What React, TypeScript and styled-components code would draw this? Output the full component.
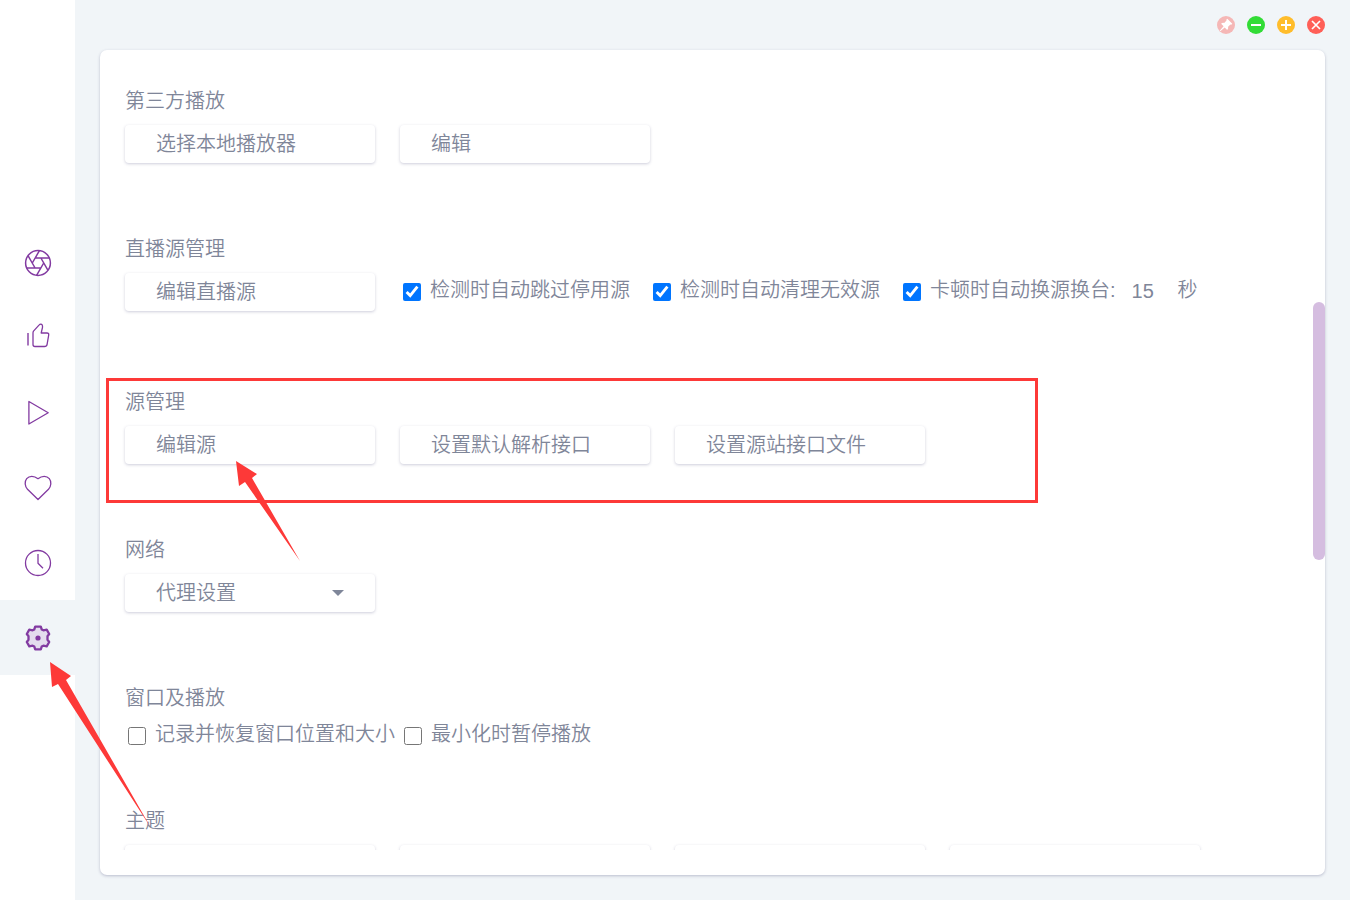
import React from "react";
import styled, { createGlobalStyle, css } from "styled-components";

const purple = "#823aa1";
const ink = "#7f8699";
const haze = "#f1f5f8";
const red = "#fd3938";

const Global = createGlobalStyle`
  * { box-sizing: border-box; }
  body {
    margin: 0;
    background: ${haze};
    color: ${ink};
    font: 350 20px/24px "Liberation Sans", "Noto Sans CJK SC", sans-serif;
  }
  button, input, select { font: inherit; color: inherit; }
`;

const Shell = styled.div`
  display: flex;
  height: 100vh;
`;

const Sidebar = styled.nav`
  flex: 0 0 75px;
  display: flex;
  flex-direction: column;
  justify-content: center;
  background: #fff;
`;

const NavSlot = styled.div`
  position: relative;
`;

const NavButton = styled.button<{ $active?: boolean }>`
  display: flex;
  align-items: center;
  justify-content: center;
  width: 100%;
  height: 75px;
  padding: 0;
  border: 0;
  background: ${(p) => (p.$active ? haze : "transparent")};
  color: ${purple};
  cursor: pointer;
`;

const Main = styled.main`
  flex: 1;
  min-width: 0;
  display: flex;
  flex-direction: column;
  padding: 0 25px 25px;
`;

const TitleBar = styled.header`
  flex: 0 0 50px;
  display: flex;
  align-items: center;
  justify-content: flex-end;
  gap: 12px;
`;

const WindowButton = styled.button<{ $color: string }>`
  display: block;
  width: 18px;
  height: 18px;
  padding: 0;
  border: 0;
  border-radius: 50%;
  background: ${(p) => p.$color};
  cursor: pointer;
`;

const Panel = styled.div`
  position: relative;
  flex: 1;
  min-height: 0;
  display: flex;
  flex-direction: column;
  padding: 25px 0;
  border-radius: 7px;
  background: #fff;
  box-shadow: 0 1px 3px rgba(60, 60, 110, 0.3);
`;

const Viewport = styled.div`
  flex: 1;
  min-height: 0;
  padding: 0 25px;
  overflow: hidden;
`;

const ScrollThumb = styled.div`
  position: absolute;
  right: 0;
  top: 252px;
  width: 12px;
  height: 258px;
  border-radius: 6px;
  background: #d5bde0;
`;

const Section = styled.section`
  position: relative;
  padding-bottom: 50px;
`;

const Title = styled.h2`
  height: 50px;
  margin: 0;
  font-size: 20px;
  font-weight: 350;
  line-height: 52px;
`;

const Row = styled.div<{ $gap?: number; $tall?: boolean }>`
  display: flex;
  align-items: flex-start;
  gap: ${(p) => p.$gap ?? 25}px;
  min-height: ${(p) => (p.$tall ? "53px" : "0")};
`;

const field = css`
  width: 250px;
  height: 38px;
  padding: 0 31px;
  border: 0;
  border-radius: 4px;
  background: #fff;
  box-shadow: 0 1px 3px rgba(60, 60, 110, 0.25);
  text-align: left;
  cursor: pointer;
`;

const ActionButton = styled.button`
  ${field}
  flex: none;
  margin-bottom: 10px;
`;

const SelectWrap = styled.div`
  position: relative;
  width: 250px;
  margin-bottom: 10px;
`;

const Select = styled.select`
  ${field}
  display: block;
  appearance: none;
`;

const Caret = styled.svg`
  position: absolute;
  right: 31px;
  top: 16px;
  pointer-events: none;
`;

const Check = styled.label`
  display: flex;
  flex: none;
  height: 23px;
  line-height: 25px;
  white-space: nowrap;
`;

const CheckBox = styled.input`
  flex: none;
  width: 18px;
  height: 18px;
  margin: 5px 9px 0 3px;
`;

const CheckRow = styled.div`
  display: flex;
  gap: 20px;
  padding-top: 5px;
`;

const Timeout = styled.div`
  display: flex;
`;

const Seconds = styled.input`
  width: 46px;
  height: 24px;
  margin: 1px 0 0 16px;
  padding: 0;
  border: 0;
  background: transparent;
`;

const Unit = styled.span`
  line-height: 25px;
`;

const Highlight = styled.div`
  position: absolute;
  left: -19px;
  top: 2px;
  width: 932px;
  height: 125px;
  border: 3px solid ${red};
  pointer-events: none;
`;

const Arrow = styled.svg<{ $x: number; $y: number }>`
  position: absolute;
  z-index: 2;
  left: ${(p) => p.$x}px;
  top: ${(p) => p.$y}px;
  fill: ${red};
  pointer-events: none;
`;

const Icon = ({ children, weight = 1.3 }: { children: React.ReactNode; weight?: number }) => (
  <svg width="30" height="30" viewBox="0.5 0.5 30 30" fill="none" stroke="currentColor" strokeWidth={weight} strokeLinejoin="round">
    {children}
  </svg>
);

const navItems = [
  {
    name: "浏览",
    icon: (
      <Icon weight={1.5}>
        <circle cx="15.5" cy="15.5" r="12.4" />
        <path d="M18.4 10.5l7.1 12.3M12.6 10.5h14.2M9.8 15.5l7.1-12.3M12.6 20.5L5.5 8.2M18.4 20.5H4.2M21.2 15.5l-7.1 12.3" />
      </Icon>
    ),
  },
  {
    name: "推荐",
    icon: (
      <Icon>
        <path d="M5.5 10.5V23" strokeWidth="1.4" />
        <path d="M10.5 10.5V22q0 2 2 2H22q2.200 0 2.600-2.200L26.200 12.500q.3-2-1.700-2H18.700L20 4.800Q20.300 1.700 18.300 1.700q-1 0-1.600.7L11 8.600q-.5.700-.5 1.900Z" />
      </Icon>
    ),
  },
  {
    name: "播放",
    icon: (
      <Icon>
        <path d="M6.400 4v22.500L25.700 15.200Z" />
      </Icon>
    ),
  },
  {
    name: "收藏",
    icon: (
      <Icon>
        <path d="M15.500 27L5 16.700C2.300 13.800 1.800 9.200 4.200 6.200C6.800 3.100 11.400 3 15.500 6.200C19.600 3 24.200 3.100 26.800 6.200C29.200 9.200 28.700 13.800 26 16.700Z" />
      </Icon>
    ),
  },
  {
    name: "历史",
    icon: (
      <Icon>
        <circle cx="15.500" cy="15.500" r="12.500" />
        <path d="M15.500 6.500v9.200l5 5" />
      </Icon>
    ),
  },
  {
    name: "设置",
    active: true,
    icon: (
      <Icon weight={2.3}>
        <path
          fill="#e4dcee"
          d="M12.700 4.200H18.300L19.200 6.900 20.900 7.800 24.200 7.200 26.700 11.500 25 13.700V17.300L26.700 19.500 24.200 23.800 20.900 23.200 19.200 24.100 18.300 26.800H12.700L11.800 24.100 10.100 23.200 6.800 23.800 4.300 19.500 6 17.300V13.700L4.300 11.500 6.800 7.200 10.100 7.800 11.800 6.900Z"
        />
        <circle cx="15.500" cy="15.500" r="2.600" fill="currentColor" stroke="none" />
      </Icon>
    ),
  },
];

const Glyph = ({ children }: { children: React.ReactNode }) => (
  <svg width="18" height="18" viewBox="0 0 18 18" fill="none" stroke="#fff" strokeWidth="2" display="block">
    {children}
  </svg>
);

const windowButtons = [
  {
    name: "置顶",
    color: "#f5b7b6",
    glyph: (
      <g stroke="none" fill="#fff">
        <path d="M10.300 2.700l5 5-1.100 1-.8-.2-2.300 2.300q.5 2-.9 3.100L7.700 11.400 3.300 15.300 2.700 14.700l3.900-4.400-2.500-2.500q1.200-1.400 3.100-.9l2.300-2.300-.2-.8Z" />
      </g>
    ),
  },
  { name: "最小化", color: "#32dc36", glyph: <path d="M4 9h10" /> },
  { name: "最大化", color: "#ffbd2b", glyph: <path d="M4 9h10M9 4v10" /> },
  { name: "关闭", color: "#ff5f57", glyph: <path d="M5 5l8 8M13 5l-8 8" strokeWidth="1.700" /> },
];

const CheckItem = ({ label, checked }: { label: string; checked?: boolean }) => (
  <Check>
    <CheckBox type="checkbox" defaultChecked={checked} />
    {label}
  </Check>
);

export default function App() {
  return (
    <>
      <Global />
      <Shell>
        <Sidebar>
          {navItems.map((item) => (
            <NavSlot key={item.name}>
              <NavButton type="button" aria-label={item.name} $active={item.active}>
                {item.icon}
              </NavButton>
              {item.active && (
                <Arrow $x={50} $y={62} width="102" height="168" viewBox="0 0 102 168">
                  <path d="M0 0L21 14 16 18 101 166 8 22 2 25Z" />
                </Arrow>
              )}
            </NavSlot>
          ))}
        </Sidebar>
        <Main>
          <TitleBar>
            {windowButtons.map((b) => (
              <WindowButton key={b.name} type="button" aria-label={b.name} $color={b.color}>
                <Glyph>{b.glyph}</Glyph>
              </WindowButton>
            ))}
          </TitleBar>
          <Panel>
            <Viewport>
              <Section>
                <Title>第三方播放</Title>
                <Row>
                  <ActionButton type="button">选择本地播放器</ActionButton>
                  <ActionButton type="button">编辑</ActionButton>
                </Row>
              </Section>
              <Section>
                <Title>直播源管理</Title>
                <Row $tall>
                  <ActionButton type="button">编辑直播源</ActionButton>
                  <CheckRow>
                    <CheckItem label="检测时自动跳过停用源" checked />
                    <CheckItem label="检测时自动清理无效源" checked />
                    <Timeout>
                      <CheckItem label="卡顿时自动换源换台:" checked />
                      <Seconds aria-label="秒" defaultValue="15" />
                      <Unit>秒</Unit>
                    </Timeout>
                  </CheckRow>
                </Row>
              </Section>
              <Section>
                <Title>源管理</Title>
                <Row>
                  <ActionButton type="button">编辑源</ActionButton>
                  <ActionButton type="button">设置默认解析接口</ActionButton>
                  <ActionButton type="button">设置源站接口文件</ActionButton>
                </Row>
                <Highlight />
                <Arrow $x={111} $y={85} width="66" height="101" viewBox="0 0 66 101">
                  <path d="M0 0L21 13 16 17 64 100 9 21 3 25Z" />
                </Arrow>
              </Section>
              <Section>
                <Title id="network">网络</Title>
                <SelectWrap>
                  <Select aria-labelledby="network">
                    <option>代理设置</option>
                  </Select>
                  <Caret width="12" height="6" viewBox="0 0 12 6" fill={ink}>
                    <path d="M0 0h12L6 6Z" />
                  </Caret>
                </SelectWrap>
              </Section>
              <Section>
                <Title>窗口及播放</Title>
                <Row $gap={6}>
                  <CheckItem label="记录并恢复窗口位置和大小" />
                  <CheckItem label="最小化时暂停播放" />
                </Row>
              </Section>
              <Section>
                <Title>主题</Title>
                <Row>
                  <ActionButton type="button" aria-label="主题 1" />
                  <ActionButton type="button" aria-label="主题 2" />
                  <ActionButton type="button" aria-label="主题 3" />
                  <ActionButton type="button" aria-label="主题 4" />
                </Row>
              </Section>
            </Viewport>
            <ScrollThumb />
          </Panel>
        </Main>
      </Shell>
    </>
  );
}
